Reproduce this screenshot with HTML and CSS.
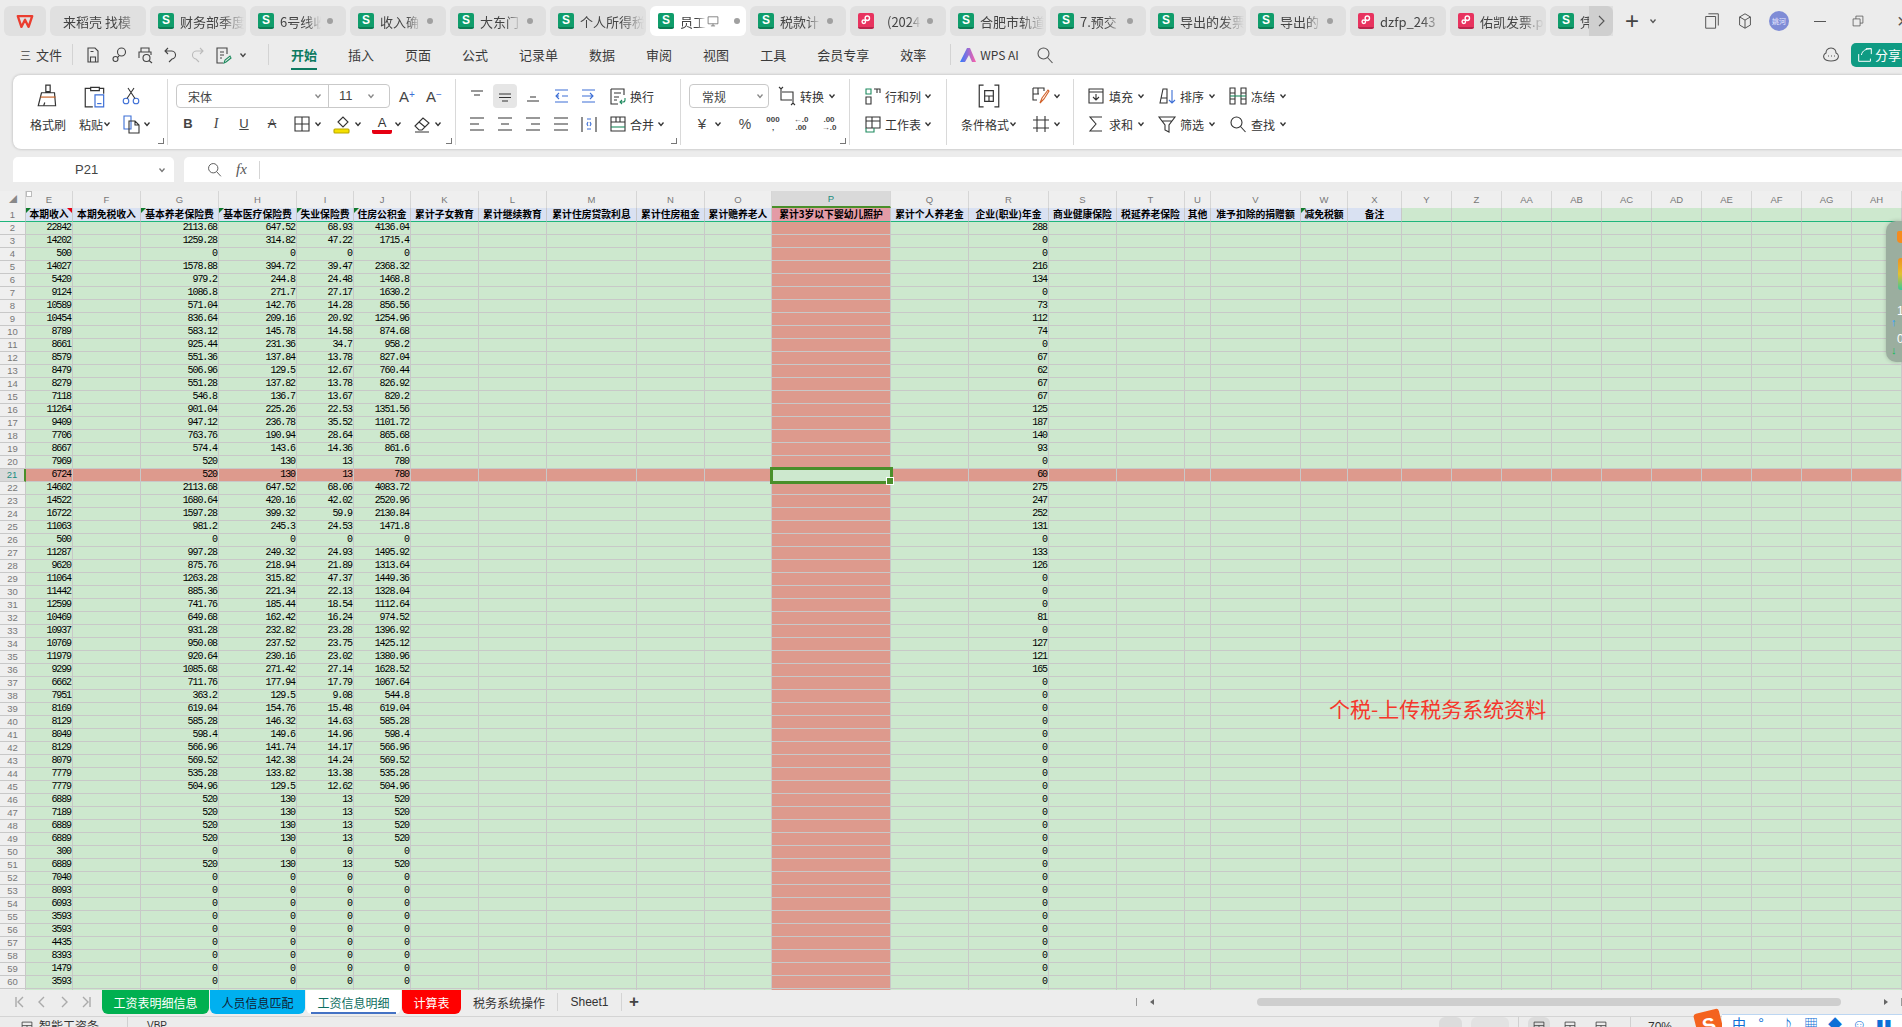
FILE: index.html
```html
<!DOCTYPE html>
<html lang="zh-CN">
<head>
  <meta charset="UTF-8">
  <title>员工 - WPS 表格</title>
  <link rel="stylesheet" href="styles.css">
</head>
<body>
  <svg class="sprite" xmlns="http://www.w3.org/2000/svg">
    <symbol id="i-caret" viewBox="0 0 8 8"><path d="M1.5 2.5 4 5.5l2.5-3"/></symbol>
    <symbol id="i-save" viewBox="0 0 20 20"><path d="M5 3h7l3 3v11H5zM7.500 17v-5h5v5M7.500 6.500h3"/></symbol>
    <symbol id="i-link" viewBox="0 0 20 20"><circle cx="12.500" cy="7" r="4"/><circle cx="6.500" cy="14" r="2.500"/><path d="M9 12l1-1"/></symbol>
    <symbol id="i-preview" viewBox="0 0 20 20"><path d="M6 7V3h8v4M4 13V7h12v3"/><circle cx="11.500" cy="13" r="3.500"/><path d="M14 15.500l3 2.500"/></symbol>
    <symbol id="i-undo" viewBox="0 0 20 20"><path d="M7 3 4 6l3 3M4 6h6a4 4 0 0 1 1 8l-3 3"/></symbol>
    <symbol id="i-redo" viewBox="0 0 20 20"><path d="M13 3l3 3-3 3M16 6h-6a4 4 0 0 0-1 8l3 3"/></symbol>
    <symbol id="i-note" viewBox="0 0 20 20"><path d="M14 9V3H4v15h6M7 7h4M7 10h4M7 13h2"/><path d="M11 18l1-3 5-4 1 2-5 4z" stroke="#1d8a5e"/></symbol>
    <symbol id="i-search" viewBox="0 0 20 20"><circle cx="8.500" cy="8.500" r="5.500"/><path d="M12.500 12.500 17.500 18"/></symbol>
    <symbol id="i-chat" viewBox="0 0 20 20"><path d="M10 3c4 0 5 3 5 5 2 1 3 3 2 5s-3 3-7 3-6-1-7-3 0-4 2-5c0-2 1-5 5-5z"/><path d="M7 11h1M10 11h1M13 11h1"/></symbol>
    <symbol id="i-brush" viewBox="0 0 24 24"><path d="M10 2h4v6h-4zM6 9h12l1 12H3z"/><path d="M5 13h14" stroke="#c8642a"/><path d="M8 21l1-3"/></symbol>
    <symbol id="i-paste" viewBox="0 0 24 24"><path d="M8 4h8v3H8zM8 5H3v17h7M16 5h4v5"/><path d="M12 11h8v11h-8z" stroke="#3d6fd6"/><path d="M14 19h4" stroke="#3d6fd6"/></symbol>
    <symbol id="i-cut" viewBox="0 0 20 20"><g stroke="#3d6fd6"><circle cx="5" cy="15" r="2.800"/><circle cx="15" cy="15" r="2.800"/></g><path d="M6 12.500 13 2M14 12.500 7 2"/></symbol>
    <symbol id="i-copy" viewBox="0 0 20 20"><path d="M3 2h7v13H3z" stroke="#3d6fd6"/><path d="M8 7h6l4 4v8H8zM14 7v4h4"/></symbol>
    <symbol id="i-border" viewBox="0 0 20 20"><path d="M3 3h14v14H3zM10 3v14M3 10h14"/></symbol>
    <symbol id="i-fill" viewBox="0 0 20 20"><path d="M6 8l5-5 5 5-5 5z"/><rect x="2" y="15" width="15" height="4" rx="1" fill="#f5e000" stroke="#b9a800"/></symbol>
    <symbol id="i-eraser" viewBox="0 0 20 20"><path d="M3 12 11 4l6 5-7 7H7zM7 8l6 5M3 18h14"/></symbol>
    <symbol id="i-atop" viewBox="0 0 20 20"><path d="M4 5h12M7 9h6"/></symbol>
    <symbol id="i-amid" viewBox="0 0 20 20"><path d="M4 8h12M4 11.500h12M7 15h6"/></symbol>
    <symbol id="i-abot" viewBox="0 0 20 20"><path d="M7 11h6M4 15h12"/></symbol>
    <symbol id="i-outdent" viewBox="0 0 20 20"><path d="M4 4h13M4 16h13M11 10h6M8 7l-3 3 3 3M5 10h3" stroke="#3d6fd6"/></symbol>
    <symbol id="i-indent" viewBox="0 0 20 20"><path d="M3 4h13M3 16h13M3 10h6M11 7l3 3-3 3M8 10h6" stroke="#3d6fd6"/></symbol>
    <symbol id="i-wrap" viewBox="0 0 20 20"><path d="M3 3h13v6M3 3v15h7M6 7h7M6 11h5M6 14h3"/><path d="M12 16h3a2 2 0 0 0 2-2v-2M14 14l-2 2 2 2" stroke="#1d8a5e"/></symbol>
    <symbol id="i-left" viewBox="0 0 20 20"><path d="M3 4h14M3 10h9M3 16h14"/></symbol>
    <symbol id="i-center" viewBox="0 0 20 20"><path d="M3 4h14M6 10h8M3 16h14"/></symbol>
    <symbol id="i-right" viewBox="0 0 20 20"><path d="M3 4h14M8 10h9M3 16h14"/></symbol>
    <symbol id="i-just" viewBox="0 0 20 20"><path d="M3 4h14M3 10h14M3 16h14"/></symbol>
    <symbol id="i-dist" viewBox="0 0 20 20"><path d="M3 3v15M17 3v15"/><path d="M8 5h4M8 15h4M9 8l-1 2 1 2M11 8l1 2-1 2" stroke="#3d6fd6"/></symbol>
    <symbol id="i-merge" viewBox="0 0 20 20"><path d="M3 3h14v14H3zM3 8h14M8 3v5M12 3v5"/><path d="M3 13h14" stroke="#1d8a5e"/></symbol>
    <symbol id="i-convert" viewBox="0 0 20 20"><path d="M4 3v11h11M6 1 4 3 2 1M16 17V6H5M14 19l2-2 2 2"/></symbol>
    <symbol id="i-rowcol" viewBox="0 0 20 20"><path d="M3 3h5v5H3z" stroke="#1d8a5e"/><path d="M11 3h6v4M3 11h5v7H3zM14 3v4"/></symbol>
    <symbol id="i-sheet" viewBox="0 0 20 20"><path d="M3 3h14v11H3zM3 7h14M9 3v11"/><path d="M3 14v4h8v-4" stroke="#1d8a5e"/></symbol>
    <symbol id="i-cond" viewBox="0 0 24 24"><path d="M7 2H3v20h4M17 2h4v20h-4M8 7h8v5H8zM8 12v5h8v-5M12 12v5"/></symbol>
    <symbol id="i-style" viewBox="0 0 20 20"><path d="M2 2h11v3M2 2v12h4M2 8h6M7 2v6"/><path d="M9 17l2-5 6-8 1 1-5 8z" stroke="#d2622a"/></symbol>
    <symbol id="i-crop" viewBox="0 0 20 20"><path d="M6 2v16M14 2v16M2 6h16M2 14h16"/></symbol>
    <symbol id="i-filldown" viewBox="0 0 20 20"><path d="M3 3h14v14H3zM3 6h14M10 8v6M7 11l3 3 3-3"/></symbol>
    <symbol id="i-sort" viewBox="0 0 20 20"><path d="M3 17 6 3h4v14H3zM4 12h6"/><path d="M15 4v13M12 14l3 3 3-3" stroke="#3d6fd6"/></symbol>
    <symbol id="i-freeze" viewBox="0 0 20 20"><path d="M2 2h5v16H2zM13 2h5v16h-5zM2 7h5M2 13h5M13 7h5M13 13h5"/><path d="M2 10h16" stroke="#1d8a5e"/></symbol>
    <symbol id="i-sum" viewBox="0 0 20 20"><path d="M16 3H4l6 7-6 7h12"/></symbol>
    <symbol id="i-filter" viewBox="0 0 20 20"><path d="M2 3h16l-6 8v7l-4-2v-5zM5 7h10"/></symbol>
    <symbol id="i-window" viewBox="0 0 20 20"><path d="M3 5h11v13H3zM6 2h11v13"/></symbol>
    <symbol id="i-cube" viewBox="0 0 20 20"><path d="M10 2l6 3.500v9L10 18l-6-3.500v-9zM4 5.500l6 3.500 6-3.500M10 9v9"/></symbol>
    <symbol id="i-restore" viewBox="0 0 20 20"><path d="M3 7h10v10H3zM7 7V3h10v10h-4"/></symbol>
    <symbol id="i-monitor" viewBox="0 0 20 20"><path d="M3 4h14v10H3zM7 17h6M10 14v3"/></symbol>
    <symbol id="i-pfile" viewBox="0 0 16 16"><circle cx="9.500" cy="6" r="2.500"/><circle cx="5.500" cy="10" r="2"/><path d="M7 8.500l1-1"/></symbol>
    <symbol id="i-first" viewBox="0 0 12 12"><path d="M2 1v10M9 1 4 6l5 5"/></symbol>
    <symbol id="i-prev" viewBox="0 0 12 12"><path d="M8 1 3 6l5 5"/></symbol>
    <symbol id="i-next" viewBox="0 0 12 12"><path d="M4 1l5 5-5 5"/></symbol>
    <symbol id="i-last" viewBox="0 0 12 12"><path d="M3 1l5 5-5 5M10 1v10"/></symbol>
    <symbol id="i-share" viewBox="0 0 20 20"><path d="M11 3h6v6M17 3c-6 0-10 2-11 7M3 9v8h13v-3"/></symbol>
    <symbol id="i-grid" viewBox="0 0 20 20"><path d="M3 3h14v14H3zM3 8h14M10 8v9"/></symbol>
  </svg>

  <div class="app">
    <header class="titlebar">
      <div class="logo-tab">
        <svg class="wps-logo" viewBox="0 0 20 16"><path d="M2 2h16l-4 12-4-8-4 8z"/></svg>
      </div>
      <div class="tabstrip">
        <div class="tab"><span class="tab-text first">来稻壳 找模</span></div>
        <div class="tab"><span class="file">S</span><span class="tab-text">财务部季度</span></div>
        <div class="tab"><span class="file">S</span><span class="tab-text">6号线收</span><span class="dot"></span></div>
        <div class="tab"><span class="file">S</span><span class="tab-text">收入确</span><span class="dot"></span></div>
        <div class="tab"><span class="file">S</span><span class="tab-text">大东门</span><span class="dot"></span></div>
        <div class="tab"><span class="file">S</span><span class="tab-text">个人所得税</span></div>
        <div class="tab active"><span class="file">S</span><span class="tab-text short">员工</span><svg class="ic tab-mon"><use href="#i-monitor"/></svg><span class="dot"></span></div>
        <div class="tab"><span class="file">S</span><span class="tab-text">税款计</span><span class="dot"></span></div>
        <div class="tab"><span class="file pdf"><svg viewBox="0 0 16 16"><use href="#i-pfile"/></svg></span><span class="tab-text pad">(2024</span><span class="dot"></span></div>
        <div class="tab"><span class="file">S</span><span class="tab-text">合肥市轨道</span></div>
        <div class="tab"><span class="file">S</span><span class="tab-text">7.预交</span><span class="dot"></span></div>
        <div class="tab"><span class="file">S</span><span class="tab-text">导出的发票</span></div>
        <div class="tab"><span class="file">S</span><span class="tab-text">导出的</span><span class="dot"></span></div>
        <div class="tab"><span class="file pdf"><svg viewBox="0 0 16 16"><use href="#i-pfile"/></svg></span><span class="tab-text">dzfp_243</span></div>
        <div class="tab"><span class="file pdf"><svg viewBox="0 0 16 16"><use href="#i-pfile"/></svg></span><span class="tab-text">佑凯发票.p</span></div>
        <div class="tab"><span class="file">S</span><span class="tab-text">凭</span></div>
        <div class="tab-more"><svg class="ic"><use href="#i-next"/></svg></div>
      </div>
      <span class="newtab">+</span>
      <svg class="caret"><use href="#i-caret"/></svg>
      <div class="win">
        <svg class="ic"><use href="#i-window"/></svg>
        <svg class="ic"><use href="#i-cube"/></svg>
        <span class="avatar">姚河</span>
        <span class="win-min"></span>
        <svg class="ic win-res"><use href="#i-restore"/></svg>
        <span class="win-close">×</span>
      </div>
    </header>

    <nav class="menubar">
      <span class="burger">三</span>
      <span class="file-menu">文件</span>
      <span class="vsep first-sep"></span>
      <div class="quick">
        <svg class="ic"><use href="#i-save"/></svg>
        <svg class="ic"><use href="#i-link"/></svg>
        <svg class="ic"><use href="#i-preview"/></svg>
        <svg class="ic"><use href="#i-undo"/></svg>
        <svg class="ic off"><use href="#i-redo"/></svg>
        <svg class="ic"><use href="#i-note"/></svg>
        <svg class="caret"><use href="#i-caret"/></svg>
      </div>
      <span class="vsep second-sep"></span>
      <div class="menus">
        <span class="menu on">开始</span>
        <span class="menu">插入</span>
        <span class="menu">页面</span>
        <span class="menu">公式</span>
        <span class="menu">记录单</span>
        <span class="menu">数据</span>
        <span class="menu">审阅</span>
        <span class="menu">视图</span>
        <span class="menu">工具</span>
        <span class="menu">会员专享</span>
        <span class="menu">效率</span>
      </div>
      <span class="vsep ai-sep"></span>
      <svg class="ai-logo" viewBox="0 0 16 14">
        <defs><linearGradient id="ai" x1="0" x2="1"><stop offset="0" stop-color="#2f7bff"/><stop offset="1" stop-color="#ff5fa8"/></linearGradient></defs>
        <path d="M0 14 7 0h3l6 14h-4L9 7l-4 7z" fill="url(#ai)"/>
      </svg>
      <span class="ai-text">WPS AI</span>
      <svg class="ic menu-search"><use href="#i-search"/></svg>
      <svg class="ic menu-chat"><use href="#i-chat"/></svg>
      <span class="share"><svg class="ic"><use href="#i-share"/></svg>分享</span>
    </nav>

    <section class="ribbon">
      <div class="grp g-clip">
        <div class="big"><svg class="ic-lg"><use href="#i-brush"/></svg><span class="big-label">格式刷</span></div>
        <div class="big paste"><svg class="ic-lg"><use href="#i-paste"/></svg><span class="big-label">粘贴<svg class="caret"><use href="#i-caret"/></svg></span></div>
        <div class="cut">
          <div class="row"><svg class="ic"><use href="#i-cut"/></svg></div>
          <div class="row"><svg class="ic"><use href="#i-copy"/></svg><svg class="caret"><use href="#i-caret"/></svg></div>
        </div>
        <span class="launch"></span>
      </div>

      <div class="grp g-font">
        <div class="row">
          <div class="select font-select">
            <span class="sel-name">宋体</span><svg class="caret"><use href="#i-caret"/></svg>
            <span class="sel-size">11</span><svg class="caret"><use href="#i-caret"/></svg>
          </div>
          <span class="grow-a">A<i>+</i></span>
          <span class="grow-a">A<i>−</i></span>
        </div>
        <div class="row font-row">
          <span class="fmt bold">B</span>
          <span class="fmt ital">I</span>
          <span class="fmt und">U</span>
          <span class="fmt strike">A</span>
          <span class="fc"><svg class="ic"><use href="#i-border"/></svg><svg class="caret"><use href="#i-caret"/></svg></span>
          <span class="fc"><svg class="ic"><use href="#i-fill"/></svg><svg class="caret"><use href="#i-caret"/></svg></span>
          <span class="fc"><span class="fcolor">A</span><svg class="caret"><use href="#i-caret"/></svg></span>
          <span class="fc"><svg class="ic"><use href="#i-eraser"/></svg><svg class="caret"><use href="#i-caret"/></svg></span>
        </div>
        <span class="launch"></span>
      </div>

      <div class="grp g-align">
        <div class="row">
          <svg class="ic"><use href="#i-atop"/></svg>
          <span class="hl"><svg class="ic"><use href="#i-amid"/></svg></span>
          <svg class="ic"><use href="#i-abot"/></svg>
          <svg class="ic"><use href="#i-outdent"/></svg>
          <svg class="ic"><use href="#i-indent"/></svg>
          <span class="tool wrap-tool"><svg class="ic"><use href="#i-wrap"/></svg>换行</span>
        </div>
        <div class="row">
          <svg class="ic"><use href="#i-left"/></svg>
          <svg class="ic"><use href="#i-center"/></svg>
          <svg class="ic"><use href="#i-right"/></svg>
          <svg class="ic"><use href="#i-just"/></svg>
          <svg class="ic"><use href="#i-dist"/></svg>
          <span class="tool wrap-tool"><svg class="ic"><use href="#i-merge"/></svg>合并<svg class="caret"><use href="#i-caret"/></svg></span>
        </div>
        <span class="launch"></span>
      </div>

      <div class="grp g-num">
        <div class="row">
          <div class="select num-select"><span class="sel-name">常规</span><svg class="caret"><use href="#i-caret"/></svg></div>
          <span class="tool convert"><svg class="ic"><use href="#i-convert"/></svg>转换<svg class="caret"><use href="#i-caret"/></svg></span>
        </div>
        <div class="row num-row">
          <span class="fc"><span class="fmt yen">¥</span><svg class="caret"><use href="#i-caret"/></svg></span>
          <span class="fmt pct">%</span>
          <span class="fmt tiny">000<br>,</span>
          <span class="fmt tiny">←.0<br>.00</span>
          <span class="fmt tiny">.00<br>→.0</span>
        </div>
        <span class="launch"></span>
      </div>

      <div class="grp g-rows">
        <div class="row"><span class="tool"><svg class="ic"><use href="#i-rowcol"/></svg>行和列<svg class="caret"><use href="#i-caret"/></svg></span></div>
        <div class="row"><span class="tool"><svg class="ic"><use href="#i-sheet"/></svg>工作表<svg class="caret"><use href="#i-caret"/></svg></span></div>
      </div>

      <div class="grp g-cond">
        <div class="big cond"><svg class="ic-lg"><use href="#i-cond"/></svg><span class="big-label">条件格式<svg class="caret"><use href="#i-caret"/></svg></span></div>
        <div class="cut">
          <div class="row"><svg class="ic"><use href="#i-style"/></svg><svg class="caret"><use href="#i-caret"/></svg></div>
          <div class="row"><svg class="ic"><use href="#i-crop"/></svg><svg class="caret"><use href="#i-caret"/></svg></div>
        </div>
      </div>

      <div class="grp g-edit">
        <span class="tool"><svg class="ic"><use href="#i-filldown"/></svg>填充<svg class="caret"><use href="#i-caret"/></svg></span>
        <span class="tool"><svg class="ic"><use href="#i-sort"/></svg>排序<svg class="caret"><use href="#i-caret"/></svg></span>
        <span class="tool"><svg class="ic"><use href="#i-freeze"/></svg>冻结<svg class="caret"><use href="#i-caret"/></svg></span>
        <span class="tool"><svg class="ic"><use href="#i-sum"/></svg>求和<svg class="caret"><use href="#i-caret"/></svg></span>
        <span class="tool"><svg class="ic"><use href="#i-filter"/></svg>筛选<svg class="caret"><use href="#i-caret"/></svg></span>
        <span class="tool"><svg class="ic"><use href="#i-search"/></svg>查找<svg class="caret"><use href="#i-caret"/></svg></span>
      </div>
    </section>

    <div class="formula">
      <div class="namebox"><span>P21</span><svg class="caret"><use href="#i-caret"/></svg></div>
      <div class="fxbox">
        <svg class="ic"><use href="#i-search"/></svg>
        <span class="fx">fx</span>
        <span class="fx-sep"></span>
      </div>
    </div>

    <main class="sheet">
      <table class="grid">
        <colgroup id="cols"></colgroup>
        <thead id="head"></thead>
        <tbody id="rows"></tbody>
      </table>
      <span class="outline-btn"></span>
      <div class="note">个税-上传税务系统资料</div>
      <aside class="float">
        <span class="shield"></span>
        <span class="gauge"></span>
        <span class="num n1">1</span>
        <span class="arr up">↑</span>
        <span class="num n2">0</span>
        <span class="arr down">↓</span>
      </aside>
    </main>

    <div class="sheetbar">
      <div class="nav">
        <svg class="nav-ic"><use href="#i-first"/></svg>
        <svg class="nav-ic"><use href="#i-prev"/></svg>
        <svg class="nav-ic"><use href="#i-next"/></svg>
        <svg class="nav-ic"><use href="#i-last"/></svg>
      </div>
      <span class="stab s-green">工资表明细信息</span>
      <span class="stab s-blue">人员信息匹配</span>
      <span class="stab s-cur">工资信息明细</span>
      <span class="stab s-red">计算表</span>
      <span class="stab s-plain">税务系统操作</span>
      <span class="stab s-sheet1">Sheet1</span>
      <span class="add-sheet">+</span>
      <div class="hscroll">
        <span class="hs-sep"></span>
        <span class="hs-left"></span>
        <span class="hs-track"><span class="hs-thumb"></span></span>
        <span class="hs-right"></span>
        <span class="hs-sep"></span>
      </div>
    </div>

    <footer class="status">
      <svg class="ic st-doc"><use href="#i-grid"/></svg>
      <span class="st-text">智能工资条</span>
      <span class="st-sep"></span>
      <span class="st-macro">VBP</span>
      <div class="st-right">
        <span class="st-btn"></span>
        <span class="st-box"></span>
        <span class="st-sep"></span>
        <span class="st-btn view on"><svg class="ic"><use href="#i-grid"/></svg></span>
        <span class="st-btn view"><svg class="ic"><use href="#i-grid"/></svg></span>
        <span class="st-btn view"><svg class="ic"><use href="#i-grid"/></svg></span>
        <span class="st-sep"></span>
        <span class="st-zoom">70%</span>
      </div>
      <span class="sogou">S</span>
      <div class="tray">
        <span>中</span><span>°,</span><span>♪</span><span>▦</span><span>◆</span><span>☺</span><span>▮▮</span>
      </div>
    </footer>
  </div>

  <script src="sheet.js"></script>
</body>
</html>
```

FILE: styles.css
```css
* {
  box-sizing: border-box;
}
html, body {
  margin: 0;
  padding: 0;
}
body {
  font-family: "Noto Sans CJK SC", "Noto Sans", sans-serif;
  font-size: 12px;
  color: #333;
  background: #ececec;
  overflow: hidden;
}
.sprite {
  display: none;
}
.app {
  width: 1902px;
  height: 1027px;
  display: flex;
  flex-direction: column;
  overflow: hidden;
  background: #ececec;
}
.ic, .ic-lg, .caret, .nav-ic, .file svg {
  fill: none;
  stroke: currentColor;
  stroke-width: 1.1;
  flex: none;
}
.ic {
  width: 20px;
  height: 20px;
}
.ic-lg {
  width: 26px;
  height: 26px;
}
.caret {
  width: 8px;
  height: 8px;
  stroke-width: 1.3;
}

/* title bar */
.titlebar {
  height: 38px;
  padding: 6px 0 2px 4px;
  display: flex;
  align-items: center;
  flex: none;
}
.logo-tab {
  width: 42px;
  height: 30px;
  margin-right: 4px;
  background: #e0e0e0;
  border-radius: 6px;
  display: flex;
  align-items: center;
  justify-content: center;
  flex: none;
}
.wps-logo {
  width: 18px;
  height: 15px;
  fill: none;
  stroke: #ea3d2f;
  stroke-width: 2.6;
  stroke-linejoin: round;
}
.tabstrip {
  width: 1563px;
  height: 30px;
  display: flex;
  gap: 4px;
  overflow: hidden;
  position: relative;
  flex: none;
}
.tab {
  width: 96px;
  height: 30px;
  flex: none;
  display: flex;
  align-items: center;
  padding: 0 2px 0 8px;
  background: #e0e0e0;
  border-radius: 6px;
  color: #444;
  font-size: 13px;
}
.tab.active {
  background: #fff;
}
.tab-text {
  flex: 1;
  min-width: 0;
  margin-left: 6px;
  white-space: nowrap;
  -webkit-mask-image: linear-gradient(90deg, #000 65%, transparent 100%);
  mask-image: linear-gradient(90deg, #000 65%, transparent 100%);
}
.tab-text.first {
  margin-left: 5px;
}
.tab-text.short {
  flex: none;
  width: 26px;
}
.tab-text.pad {
  margin-left: 13px;
}
.tab-mon {
  width: 14px;
  height: 14px;
  margin: 0 8px 0 0;
  color: #666;
}
.file {
  width: 16px;
  height: 16px;
  flex: none;
  background: #0f9d6b;
  border-bottom: 2px solid #0a7a52;
  border-radius: 2px;
  color: #fff;
  font: 700 12px/14px "Liberation Sans", sans-serif;
  text-align: center;
}
.file.pdf {
  background: #e8335f;
  border-bottom-color: #b8244a;
}
.file svg {
  display: block;
  width: 14px;
  height: 14px;
  margin: 0 1px;
  stroke-width: 1.6;
}
.dot {
  width: 6px;
  height: 6px;
  margin: 0 11px 0 6px;
  border-radius: 50%;
  background: #a0a0a0;
  flex: none;
}
.tab-more {
  position: absolute;
  right: 0;
  top: 0;
  width: 24px;
  height: 30px;
  background: #cfcfcf;
  border-radius: 0 6px 6px 0;
  display: flex;
  align-items: center;
  justify-content: center;
  color: #555;
}
.tab-more .ic {
  width: 12px;
  height: 12px;
}
.newtab {
  width: 20px;
  margin-left: 9px;
  text-align: center;
  font: 400 24px/24px "Liberation Sans", sans-serif;
  color: #444;
  flex: none;
}
.titlebar > .caret {
  margin-left: 7px;
  color: #555;
}
.win {
  display: flex;
  align-items: center;
  margin-left: 46px;
  color: #555;
  flex: none;
}
.win .ic {
  width: 18px;
  height: 18px;
  margin-right: 15px;
}
.avatar {
  width: 20px;
  height: 20px;
  border-radius: 50%;
  background: #7f8cd6;
  color: #e8eaff;
  font-size: 7px;
  line-height: 20px;
  text-align: center;
  margin-right: 25px;
}
.win-min {
  width: 12px;
  height: 1px;
  background: #555;
  margin-right: 25px;
}
.win .win-res {
  width: 14px;
  height: 14px;
  margin-right: 32px;
}
.win-close {
  font: 400 20px/20px "Liberation Sans", sans-serif;
}

/* menu bar */
.menubar {
  height: 37px;
  padding: 0 0 4px 20px;
  display: flex;
  align-items: center;
  flex: none;
  font-size: 13px;
  color: #3a3a3a;
  white-space: nowrap;
}
.burger {
  width: 12px;
  font-size: 11px;
  color: #444;
  flex: none;
}
.file-menu {
  margin-left: 4px;
  width: 36px;
  flex: none;
}
.vsep {
  width: 1px;
  height: 21px;
  background: #d3d3d3;
  flex: none;
}
.quick {
  display: flex;
  align-items: center;
  margin-left: 10px;
  gap: 6px;
  color: #444;
  flex: none;
}
.quick .ic {
  width: 20px;
}
.quick .ic.off {
  color: #bbb;
}
.second-sep {
  margin-left: 21px;
}
.menus {
  display: flex;
  gap: 31px;
  margin-left: 22px;
  flex: none;
}
.menu {
  position: relative;
  line-height: 20px;
  flex: none;
}
.menu.on {
  color: #0d7a60;
  font-weight: 700;
}
.menu.on::after {
  content: "";
  position: absolute;
  left: 0;
  right: 0;
  bottom: -5px;
  height: 2px;
  background: #0d7a60;
}
.ai-sep {
  margin-left: 24px;
}
.ai-logo {
  width: 16px;
  height: 14px;
  margin-left: 9px;
  flex: none;
}
.ai-text {
  margin-left: 4px;
  width: 44px;
  font-size: 12px;
  flex: none;
}
.menu-search {
  margin-left: 11px;
  color: #555;
}
.menu-chat {
  margin-left: auto;
  color: #555;
}
.share {
  margin-left: 10px;
  width: 51px;
  height: 24px;
  padding-left: 5px;
  background: #0f9b83;
  border-radius: 5px 0 0 5px;
  color: #fff;
  display: flex;
  align-items: center;
  gap: 1px;
  flex: none;
}
.share .ic {
  width: 18px;
  height: 18px;
}

/* ribbon */
.ribbon {
  height: 74px;
  margin-left: 13px;
  display: flex;
  align-items: flex-start;
  padding-top: 4px;
  background: #fff;
  border-radius: 8px 0 0 8px;
  box-shadow: 0 0 3px rgba(0, 0, 0, 0.25);
  flex: none;
}
.grp {
  position: relative;
  height: 66px;
  padding-top: 3px;
  border-right: 1px solid #d9d9d9;
  flex: none;
}
.row {
  height: 28px;
  display: flex;
  align-items: center;
}
.tool {
  display: inline-flex;
  align-items: center;
  gap: 3px;
  white-space: nowrap;
}
.tool .caret {
  margin-left: 1px;
}
.launch {
  position: absolute;
  right: 3px;
  bottom: 1px;
  width: 6px;
  height: 6px;
  border-right: 1px solid #777;
  border-bottom: 1px solid #777;
}
.big {
  display: flex;
  flex-direction: column;
  align-items: center;
}
.big .ic-lg {
  height: 28px;
}
.big-label {
  display: flex;
  align-items: center;
  height: 28px;
  white-space: nowrap;
}
.g-clip {
  width: 155px;
  padding-left: 17px;
  display: flex;
}
.g-clip .big {
  width: 36px;
}
.g-clip .paste {
  margin-left: 12px;
  width: 34px;
}
.cut {
  margin-left: 9px;
}
.cut .caret {
  margin-left: 2px;
}
.g-font {
  width: 288px;
  padding-left: 8px;
}
.select {
  height: 24px;
  display: flex;
  align-items: center;
  border: 1px solid #c9c9c9;
  border-radius: 4px;
  color: #444;
}
.font-select {
  width: 214px;
}
.sel-name {
  margin-left: 11px;
  width: 126px;
}
.sel-size {
  width: 39px;
  height: 22px;
  margin-left: 6px;
  padding-left: 10px;
  line-height: 22px;
  border-left: 1px solid #c9c9c9;
  font-family: "Liberation Sans", sans-serif;
  font-size: 13px;
}
.select .caret {
  color: #888;
}
.grow-a {
  width: 20px;
  margin-left: 7px;
  font: 400 15px/20px "Liberation Sans", sans-serif;
  color: #444;
}
.grow-a:first-of-type {
  margin-left: 9px;
}
.grow-a i {
  font-style: normal;
  color: #3d6fd6;
  font-size: 10px;
  vertical-align: 4px;
}
.font-row {
  padding-left: 2px;
  gap: 8px;
}
.fmt {
  width: 20px;
  text-align: center;
  font: 400 13px/20px "Liberation Sans", sans-serif;
  color: #444;
  flex: none;
}
.bold {
  font-weight: 700;
}
.ital {
  font-style: italic;
  font-family: "Liberation Serif", serif;
  font-size: 14px;
}
.und {
  text-decoration: underline;
}
.strike {
  text-decoration: line-through;
}
.fc {
  display: flex;
  align-items: center;
  gap: 2px;
  margin-left: 2px;
  flex: none;
}
.fcolor {
  width: 20px;
  height: 19px;
  text-align: center;
  font: 400 13px/15px "Liberation Sans", sans-serif;
  border-bottom: 4px solid #e60012;
  border-radius: 2px;
}
.g-align {
  width: 225px;
  padding-left: 11px;
}
.g-align .row {
  gap: 8px;
}
.hl {
  width: 24px;
  height: 24px;
  margin: 0 -2px;
  display: flex;
  align-items: center;
  justify-content: center;
  background: #e6e6e6;
  border-radius: 4px;
}
.g-align .wrap-tool {
  margin-left: 1px;
  gap: 2px;
}
.g-num {
  width: 169px;
  padding-left: 8px;
}
.num-select {
  width: 80px;
}
.num-select .sel-name {
  margin-left: 12px;
  width: 54px;
}
.convert {
  margin-left: 8px;
}
.num-row {
  padding-left: 3px;
  gap: 8px;
}
.num-row .fc {
  margin: 0 5px 0 0;
}
.yen {
  font-size: 15px;
}
.pct {
  font-size: 14px;
}
.tiny {
  font-size: 8px;
  font-weight: 700;
  line-height: 8px;
}
.g-rows {
  width: 97px;
  padding-left: 13px;
}
.g-rows .tool {
  gap: 2px;
}
.g-cond {
  width: 127px;
  padding-left: 13px;
  display: flex;
}
.cond {
  width: 58px;
}
.g-cond .cut {
  margin-left: 13px;
}
.g-edit {
  padding-left: 12px;
  border-right: 0;
  display: grid;
  grid-template-columns: repeat(3, 71px);
  grid-auto-rows: 28px;
  align-items: center;
}

/* formula bar */
.formula {
  height: 25px;
  margin: 8px 0 9px 13px;
  display: flex;
  gap: 10px;
  flex: none;
}
.namebox {
  width: 161px;
  display: flex;
  align-items: center;
  background: #fff;
  border-radius: 5px 5px 0 0;
  font: 400 13px "Liberation Sans", sans-serif;
  padding-left: 62px;
  color: #444;
}
.namebox .caret {
  margin-left: 60px;
  color: #777;
}
.fxbox {
  flex: 1;
  display: flex;
  align-items: center;
  padding-left: 22px;
  background: #fff;
  border-radius: 5px 0 0 0;
  color: #555;
}
.fxbox .ic {
  width: 17px;
  height: 17px;
}
.fx {
  margin-left: 13px;
  width: 18px;
  font: italic 15px "Liberation Serif", serif;
}
.fx-sep {
  width: 1px;
  height: 18px;
  margin-left: 5px;
  background: #d5d5d5;
}

/* sheet */
.sheet {
  position: relative;
  height: 799px;
  overflow: hidden;
  flex: none;
}
.grid {
  width: 1902px;
  table-layout: fixed;
  border-collapse: separate;
  border-spacing: 0;
}
.grid th, .grid td {
  padding: 0;
  border-right: 1px solid #c8c8c8;
  border-bottom: 1px solid #c8c8c8;
  overflow: visible;
  white-space: nowrap;
}
.letters th {
  height: 15px;
  background: #efefef;
  border-right-color: #d6d6d6;
  border-bottom: 0;
  font: 400 9.500px/15px "Liberation Sans", sans-serif;
  color: #777;
}
.letters th.corner {
  color: #888;
  font-size: 8px;
}
.letters th.on {
  background: #d9d9d9;
  color: #1b8d80;
  border-bottom: 2px solid #4a8f2a;
}
.titles td, .titles th {
  height: 14px;
  border-bottom: 1px solid #1fb57c;
}
.titles td {
  position: relative;
  background: #cde8ce;
  font: 700 9.800px/13px "Noto Sans CJK SC", sans-serif;
  color: #000;
  text-align: center;
}
.titles td.band {
  background: #d9e1f2;
}
.titles td.on {
  background: #e39ba6;
}
.titles td.flag::before,
.titles td.warn::after {
  content: "";
  position: absolute;
  top: 0;
  border-top: 5px solid #0f7a2c;
  border-right: 5px solid transparent;
}
.titles td.flag::before {
  left: 0;
}
.titles td.warn::after {
  right: 0;
  border-top-color: #e60012;
  border-right: 0;
  border-left: 5px solid transparent;
}
.rowhead {
  background: #efefef;
  font: 400 9.500px/12px "Liberation Sans", sans-serif;
  color: #777;
  text-align: center;
}
.rowhead.on {
  background: #d9d9d9;
  color: #1b8d80;
  border-right: 2px solid #4a8f2a;
}
.data td {
  height: 13px;
  background: #cde8ce;
  font: 400 10px/12px "Liberation Mono", monospace;
  letter-spacing: -1.100px;
  color: #000;
  text-align: right;
  padding-right: 1px;
}
.data td.hot {
  background: #dd9a8d;
}
.data td.sel {
  position: relative;
  background: #cde8ce;
  outline: 3px solid #4a8f2a;
  outline-offset: -1px;
  z-index: 2;
}
.data td.sel::after {
  content: "";
  position: absolute;
  right: -4px;
  bottom: -4px;
  width: 6px;
  height: 6px;
  background: #4a8f2a;
  border: 1px solid #fff;
}
.outline-btn {
  position: absolute;
  left: 26px;
  top: 0;
  width: 6px;
  height: 6px;
  background: #fff;
  border: 1px solid #bbb;
}
.note {
  position: absolute;
  left: 1329px;
  top: 503px;
  font-size: 21px;
  line-height: 28px;
  color: #f5372c;
  white-space: nowrap;
}
.float {
  position: absolute;
  left: 1886px;
  top: 30px;
  width: 16px;
  height: 141px;
  background: #9bae9f;
  border-radius: 10px 0 0 10px;
  box-shadow: 0 0 4px rgba(0, 0, 0, 0.2);
  color: #fff;
  font: 400 12px "Liberation Sans", sans-serif;
}
.float > span {
  position: absolute;
}
.shield {
  left: 11px;
  top: 10px;
  width: 5px;
  height: 12px;
  background: #f58b1f;
  border-radius: 2px 0 0 4px;
}
.gauge {
  left: 12px;
  top: 37px;
  width: 4px;
  height: 32px;
  background: linear-gradient(#f09020, #e3c030 50%, #39c79a);
  border-radius: 3px 0 0 3px;
}
.n1 {
  left: 11px;
  top: 83px;
}
.n2 {
  left: 11px;
  top: 111px;
}
.arr {
  left: 5px;
  font-weight: 700;
  font-size: 11px;
}
.up {
  top: 95px;
  color: #1aa3ff;
}
.down {
  top: 123px;
  color: #0cbf5a;
}

/* sheet tabs */
.sheetbar {
  height: 26px;
  display: flex;
  align-items: flex-start;
  flex: none;
  font-size: 12px;
  background: #ededed;
}
.nav {
  width: 102px;
  height: 24px;
  padding-left: 14px;
  display: flex;
  align-items: center;
  gap: 10px;
  color: #aaa;
  flex: none;
}
.nav-ic {
  width: 12px;
  height: 12px;
  stroke-width: 1.4;
}
.stab {
  height: 24px;
  line-height: 25px;
  text-align: center;
  white-space: nowrap;
  border-radius: 0 0 6px 6px;
  flex: none;
}
.s-green {
  width: 107px;
  margin-right: 1px;
  background: #00b050;
  color: #fff;
}
.s-blue {
  width: 95px;
  margin-right: 1px;
  background: #00b0f0;
  color: #123;
}
.s-cur {
  position: relative;
  width: 95px;
  margin-right: 1px;
  background: #fff;
  color: #0d6e60;
}
.s-cur::after {
  content: "";
  position: absolute;
  left: 5px;
  right: 5px;
  bottom: 0;
  height: 2px;
  background: #4472c4;
}
.s-red {
  width: 59px;
  background: #ff0000;
  color: #fff;
}
.s-plain {
  width: 97px;
  color: #333;
  border-right: 1px solid #d4d4d4;
  border-radius: 0;
  height: 18px;
  line-height: 19px;
  margin-top: 3px;
}
.s-sheet1 {
  width: 64px;
  color: #333;
  border-right: 1px solid #d4d4d4;
  border-radius: 0;
  height: 18px;
  line-height: 19px;
  margin-top: 3px;
  font-family: "Liberation Sans", sans-serif;
}
.add-sheet {
  width: 24px;
  text-align: center;
  font: 700 17px/24px "Liberation Sans", sans-serif;
  color: #444;
  flex: none;
}
.hscroll {
  margin-left: 490px;
  height: 24px;
  flex: 1;
  display: flex;
  align-items: center;
}
.hs-sep {
  width: 1px;
  height: 8px;
  background: #999;
  flex: none;
}
.hs-left, .hs-right {
  width: 0;
  height: 0;
  border-top: 3px solid transparent;
  border-bottom: 3px solid transparent;
  flex: none;
}
.hs-left {
  margin-left: 13px;
  border-right: 4px solid #666;
}
.hs-right {
  margin-right: 13px;
  border-left: 4px solid #666;
}
.hs-track {
  flex: 1;
  height: 8px;
  padding: 0 43px 0 103px;
}
.hs-thumb {
  display: block;
  height: 8px;
  background: #cecece;
  border-radius: 4px;
}

/* status bar */
.status {
  position: relative;
  height: 11px;
  flex: 1;
  display: flex;
  align-items: flex-start;
  border-top: 1px solid #d4d4d4;
  background: #ececec;
  padding-left: 20px;
}
.st-doc {
  width: 14px;
  height: 14px;
  margin-top: 3px;
}
.st-text {
  margin: 1px 0 0 5px;
  line-height: 16px;
}
.st-sep {
  width: 1px;
  height: 11px;
  margin: 0 9px;
  background: #d0d0d0;
  flex: none;
}
.status > .st-sep {
  margin: 0 0 0 28px;
}
.st-macro {
  margin: 3px 0 0 19px;
  font: 400 10px "Liberation Sans", sans-serif;
}
.st-right {
  margin-left: auto;
  padding-right: 230px;
  display: flex;
  align-items: flex-start;
}
.st-btn {
  width: 23px;
  height: 11px;
  background: #dcdcdc;
  border-radius: 6px 6px 0 0;
  margin-right: 9px;
}
.st-box {
  width: 38px;
  height: 11px;
  background: #e2e2e2;
  border-radius: 6px 6px 0 0;
}
.st-btn.view {
  width: 22px;
  background: none;
  margin-right: 9px;
  display: flex;
  justify-content: center;
}
.st-btn.view.on {
  background: #dcdcdc;
}
.st-btn .ic {
  width: 14px;
  height: 14px;
  margin-top: 3px;
}
.st-zoom {
  margin: 3px 0 0 8px;
  font: 400 12px "Liberation Sans", sans-serif;
}
.sogou {
  position: absolute;
  left: 1696px;
  top: -6px;
  width: 26px;
  height: 28px;
  background: #f4631f;
  border-radius: 3px;
  transform: rotate(-14deg);
  color: #fff;
  font: 700 20px/28px "Liberation Sans", sans-serif;
  text-align: center;
}
.tray {
  position: absolute;
  left: 1722px;
  top: -3px;
  right: 0;
  height: 16px;
  padding-left: 10px;
  display: flex;
  gap: 10px;
  background: #fff;
  border-top: 1px solid #bcd6f2;
  color: #0d6fd6;
  font-size: 14px;
  line-height: 17px;
}
.tray span {
  width: 14px;
  text-align: center;
}
```

FILE: sheet.js
```js
const letters = "E F G H I J K L M N O P Q R S T U V W X Y Z AA AB AC AD AE AF AG AH".split(" ");
const widths = [47, 68, 78, 78, 57, 57, 68, 68, 90, 68, 67, 119, 78, 80, 68, 68, 26, 90, 47, 54, 50, 50, 50, 50, 50, 50, 50, 50, 50, 50];

const titles = ["本期收入", "本期免税收入", "基本养老保险费", "基本医疗保险费", "失业保险费", "住房公积金",
  "累计子女教育", "累计继续教育", "累计住房贷款利息", "累计住房租金", "累计赡养老人", "累计3岁以下婴幼儿照护",
  "累计个人养老金", "企业(职业)年金", "商业健康保险", "税延养老保险", "其他", "准予扣除的捐赠额", "减免税额", "备注"];

const flagged = ["E", "G", "H", "I", "J", "W"];
const hotCol = "P";
const hotRow = 21;

// E, G, H, I, J, R for rows 2..60
const data = [
  [22842, 2113.68, 647.52, 68.93, 4136.04, 288],
  [14202, 1259.28, 314.82, 47.22, 1715.4, 0],
  [500, 0, 0, 0, 0, 0],
  [14027, 1578.88, 394.72, 39.47, 2368.32, 216],
  [5420, 979.2, 244.8, 24.48, 1468.8, 134],
  [9124, 1086.8, 271.7, 27.17, 1630.2, 0],
  [10589, 571.04, 142.76, 14.28, 856.56, 73],
  [10454, 836.64, 209.16, 20.92, 1254.96, 112],
  [8789, 583.12, 145.78, 14.58, 874.68, 74],
  [8661, 925.44, 231.36, 34.7, 958.2, 0],
  [8579, 551.36, 137.84, 13.78, 827.04, 67],
  [8479, 506.96, 129.5, 12.67, 760.44, 62],
  [8279, 551.28, 137.82, 13.78, 826.92, 67],
  [7118, 546.8, 136.7, 13.67, 820.2, 67],
  [11264, 901.04, 225.26, 22.53, 1351.56, 125],
  [9409, 947.12, 236.78, 35.52, 1101.72, 187],
  [7706, 763.76, 190.94, 28.64, 865.68, 140],
  [8667, 574.4, 143.6, 14.36, 861.6, 93],
  [7969, 520, 130, 13, 780, 0],
  [6724, 520, 130, 13, 780, 60],
  [14602, 2113.68, 647.52, 68.06, 4083.72, 275],
  [14522, 1680.64, 420.16, 42.02, 2520.96, 247],
  [16722, 1597.28, 399.32, 59.9, 2130.84, 252],
  [11063, 981.2, 245.3, 24.53, 1471.8, 131],
  [500, 0, 0, 0, 0, 0],
  [11287, 997.28, 249.32, 24.93, 1495.92, 133],
  [9620, 875.76, 218.94, 21.89, 1313.64, 126],
  [11064, 1263.28, 315.82, 47.37, 1449.36, 0],
  [11442, 885.36, 221.34, 22.13, 1328.04, 0],
  [12599, 741.76, 185.44, 18.54, 1112.64, 0],
  [10469, 649.68, 162.42, 16.24, 974.52, 81],
  [10937, 931.28, 232.82, 23.28, 1396.92, 0],
  [10769, 950.08, 237.52, 23.75, 1425.12, 127],
  [11979, 920.64, 230.16, 23.02, 1380.96, 121],
  [9299, 1085.68, 271.42, 27.14, 1628.52, 165],
  [6662, 711.76, 177.94, 17.79, 1067.64, 0],
  [7951, 363.2, 129.5, 9.08, 544.8, 0],
  [8169, 619.04, 154.76, 15.48, 619.04, 0],
  [8129, 585.28, 146.32, 14.63, 585.28, 0],
  [8049, 598.4, 149.6, 14.96, 598.4, 0],
  [8129, 566.96, 141.74, 14.17, 566.96, 0],
  [8079, 569.52, 142.38, 14.24, 569.52, 0],
  [7779, 535.28, 133.82, 13.38, 535.28, 0],
  [7779, 504.96, 129.5, 12.62, 504.96, 0],
  [6889, 520, 130, 13, 520, 0],
  [7189, 520, 130, 13, 520, 0],
  [6889, 520, 130, 13, 520, 0],
  [6889, 520, 130, 13, 520, 0],
  [300, 0, 0, 0, 0, 0],
  [6889, 520, 130, 13, 520, 0],
  [7040, 0, 0, 0, 0, 0],
  [8093, 0, 0, 0, 0, 0],
  [6093, 0, 0, 0, 0, 0],
  [3593, 0, 0, 0, 0, 0],
  [3593, 0, 0, 0, 0, 0],
  [4435, 0, 0, 0, 0, 0],
  [8393, 0, 0, 0, 0, 0],
  [1479, 0, 0, 0, 0, 0],
  [3593, 0, 0, 0, 0, 0],
  ["", "", "", "", "", ""]
];
const dataCols = { E: 0, G: 1, H: 2, I: 3, J: 4, R: 5 };

document.getElementById("cols").innerHTML =
  '<col style="width:26px">' + widths.map(w => `<col style="width:${w}px">`).join("");

// column letters + header row
let head = '<tr class="letters"><th class="corner">◢</th>';
letters.forEach(l => {
  head += `<th class="${l === hotCol ? "on" : ""}">${l}</th>`;
});
head += '</tr><tr class="titles"><th class="rowhead">1</th>';
letters.forEach((l, i) => {
  const cls = [];
  if (i < titles.length) cls.push("band");
  if (l === hotCol) cls.push("on");
  if (flagged.includes(l)) cls.push("flag");
  if (l === "E") cls.push("warn");
  head += `<td class="${cls.join(" ")}">${titles[i] || ""}</td>`;
});
document.getElementById("head").innerHTML = head + "</tr>";

// body rows
let body = "";
data.forEach((vals, r) => {
  const rowNo = r + 2;
  const isHot = rowNo === hotRow;
  body += `<tr class="data"><th class="rowhead${isHot ? " on" : ""}">${rowNo}</th>`;
  letters.forEach(l => {
    let cls = "";
    if (isHot && l === hotCol) cls = "sel";
    else if (isHot || l === hotCol) cls = "hot";
    const v = l in dataCols ? vals[dataCols[l]] : "";
    body += `<td class="${cls}">${v}</td>`;
  });
  body += "</tr>";
});
document.getElementById("rows").innerHTML = body;
```
